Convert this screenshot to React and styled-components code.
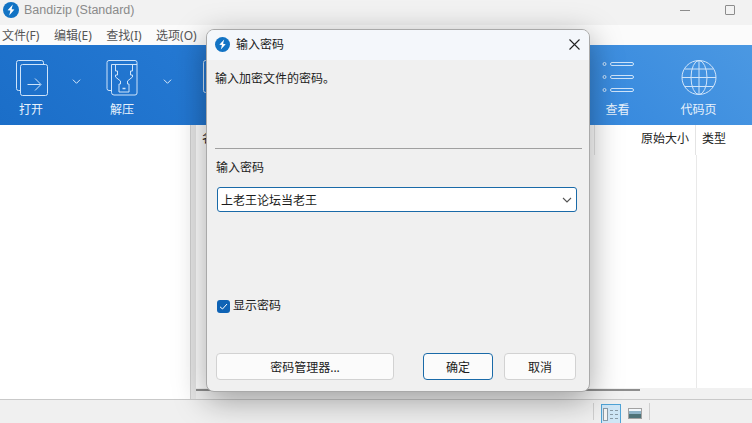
import styled, { createGlobalStyle } from "styled-components"

const GlobalStyle = createGlobalStyle`
  * { box-sizing: border-box; }
  html, body { margin: 0; padding: 0; }
  body {
    font-family: "Noto Sans", "Noto Sans CJK SC", sans-serif;
    font-size: 12px;
    color: #1c1c1c;
    background: #f3f3f3;
  }
`

const LogoIcon = ({ size = 16 }) => (
  <svg width={size} height={size} viewBox="0 0 16 16">
    <circle cx="8" cy="8" r="8" fill="#1273c4" />
    <path d="M9.8 2.6 L4.6 8.2 L7.4 8.6 L6.2 13.4 L11.4 7.6 L8.6 7.2 Z" fill="#fff" />
  </svg>
)

const OpenIcon = () => (
  <svg width="33" height="36" viewBox="0 0 33 36" fill="none" stroke="#cfe4fa" strokeWidth="1">
    <path d="M5.5 30.5 H3.5 a2 2 0 0 1 -2 -2 V2.5 a2 2 0 0 1 2 -2 H26.5 a2 2 0 0 1 2 2 V4.5" />
    <rect x="5.5" y="4.5" width="27" height="31" rx="2" />
    <path d="M12.5 24.5 H25.5 M20 18.5 L26 24.5 L20 30.5" />
  </svg>
)

const UnzipIcon = () => (
  <svg width="32" height="36" viewBox="0 0 32 36" fill="none" stroke="#cfe4fa" strokeWidth="1">
    <path d="M5.5 30.5 H3 a2 2 0 0 1 -2 -2 V2.5 a2 2 0 0 1 2 -2 H29 a2 2 0 0 1 2 2 V33 a2 2 0 0 1 -2 2 H8 a2.5 2.5 0 0 1 -2.5 -2.5 V4.5 H31" />
    <path d="M9.5 4.5 V11 H11.5 V15 H9.5 V17 L14.5 21 V24 H13 V32 H23 V24 H21.5 V21 L26.5 17 V15 H24.5 V11 H26.5 V4.5" />
    <path d="M16.5 28.5 H19.5" strokeWidth="1.5" />
  </svg>
)

const TestIcon = () => (
  <svg width="32" height="36" viewBox="0 0 32 36" fill="none" stroke="#cfe4fa" strokeWidth="1">
    <rect x="0.5" y="0.5" width="30" height="32" rx="2" />
  </svg>
)

const ListIcon = () => (
  <svg width="32" height="36" viewBox="0 0 32 36" fill="none" stroke="#cfe4fa" strokeWidth="1">
    <circle cx="2.5" cy="4" r="1.5" />
    <circle cx="2.5" cy="17" r="1.5" />
    <circle cx="2.5" cy="30" r="1.5" />
    <rect x="8.5" y="2.5" width="23" height="3" rx="1.5" />
    <rect x="8.5" y="15.5" width="23" height="3" rx="1.5" />
    <rect x="8.5" y="28.5" width="23" height="3" rx="1.5" />
  </svg>
)

const GlobeIcon = () => (
  <svg width="36" height="36" viewBox="0 0 36 36" fill="none" stroke="#cfe4fa" strokeWidth="1">
    <circle cx="18" cy="17.5" r="17" />
    <ellipse cx="18" cy="17.5" rx="8" ry="17" />
    <path d="M18 0.5 V34.5 M1 17.5 H35 M4 9 H32 M4 26.5 H32" />
  </svg>
)

const Chevron = ({ color = "#dcebfb", size = 9 }) => (
  <svg width={size} height={size} viewBox="0 0 10 10" fill="none" stroke={color} strokeWidth="1.1">
    <path d="M1 3 L5 7 L9 3" />
  </svg>
)

const Page = styled.div`
  position: relative;
  width: 752px;
  height: 423px;
  overflow: hidden;
  display: flex;
  flex-direction: column;
  background: #f3f3f3;
`

const TitleBar = styled.div`
  height: 25px;
  flex: none;
  display: flex;
  align-items: center;
  padding: 0 17px 5px 3px;
  gap: 5px;
  background: #f2f2f2;
  color: #8a8a8a;
  font-family: "Liberation Sans", "Noto Sans CJK SC", sans-serif;
  font-size: 12.5px;
`

const TitleText = styled.span`
  flex: 1;
`

const MinimizeGlyph = styled.span`
  width: 10px;
  height: 1px;
  background: #8c8c8c;
  margin-right: 30px;
`

const MaximizeGlyph = styled.span`
  width: 10px;
  height: 10px;
  border: 1px solid #8c8c8c;
  border-radius: 1px;
`

const MenuBar = styled.div`
  height: 20px;
  flex: none;
  display: flex;
  align-items: center;
  gap: 14.5px;
  padding-left: 2px;
  background: #fbfbfb;
  color: #555;
  font-size: 12px;
`

const Toolbar = styled.div`
  height: 80px;
  flex: none;
  display: flex;
  align-items: stretch;
  background: linear-gradient(45deg, #1b6ec8 0%, #2d82dc 60%, #4b98e2 100%);
  color: #e8f2fc;
`

const ToolGroup = styled.div`
  display: flex;
  margin-left: ${(p) => (p.$right ? "auto" : "0")};
`

const Tool = styled.div`
  width: ${(p) => p.$width}px;
  display: flex;
  flex-direction: column;
  align-items: center;
  padding-top: 15px;
  gap: 5px;
  font-size: 12px;
  line-height: 17px;
`

const ToolChevron = styled.div`
  width: 29px;
  padding: 28px 0 0 10px;
`

const Body = styled.div`
  flex: 1;
  display: flex;
  min-height: 0;
`

const SidePanel = styled.div`
  width: 190px;
  background: #fff;
`

const Splitter = styled.div`
  width: 6px;
  background: #e6e6e6;
  border-left: 1px solid #cfcfcf;
`

const ListPane = styled.div`
  flex: 1;
  display: flex;
  flex-direction: column;
  background: #fff;
`

const ListHeader = styled.div`
  height: 30px;
  display: flex;
  line-height: 27px;
  color: #222;
`

const HeaderCell = styled.div`
  flex: ${(p) => (p.$width ? `0 0 ${p.$width}px` : "1")};
  padding: 0 6px 0 6px;
  text-align: ${(p) => (p.$end ? "right" : "left")};
  border-right: 1px solid #e4e4e4;
  &:last-child { border-right: none; }
`

const ListRows = styled.div`
  flex: 1;
  display: flex;
  justify-content: flex-end;
`

const ColumnLine = styled.div`
  width: 56px;
  border-left: 1px solid #e9e9e9;
`

const ScrollTrack = styled.div`
  height: 11px;
  background: #f1f1f1;
  display: flex;
  align-items: flex-start;
  padding-top: 1px;
`

const ScrollThumb = styled.div`
  width: 444px;
  height: 2px;
  background: #8d8d8d;
`

const StatusBar = styled.div`
  height: 24px;
  flex: none;
  display: flex;
  align-items: center;
  justify-content: flex-end;
  padding-right: 99px;
  gap: 4px;
  background: #f0f0f0;
  border-top: 1px solid #c9c9c9;
`

const StatusDivider = styled.div`
  width: 1px;
  height: 17px;
  background: #cfcfcf;
  margin: 0 3px;
`

const DetailButton = styled.div`
  width: 20px;
  height: 19px;
  align-self: flex-end;
  display: flex;
  align-items: center;
  justify-content: center;
  background: #cfe6f6;
  border: 1px solid #4fa3d6;
  border-bottom: none;
`

const Thumb = styled.div`
  width: 14px;
  height: 11px;
  margin: 3px 0 0 3px;
  border: 1px solid #a2a2a2;
  background: linear-gradient(#f4f8fb 0 25%, #8fb4c8 25% 60%, #4f7378 60%);
`

const Dialog = styled.div`
  position: absolute;
  left: 206px;
  top: 29px;
  width: 384px;
  height: 363px;
  display: flex;
  flex-direction: column;
  background: #f0f0f0;
  border: 1px solid #a9a9a9;
  border-radius: 8px;
  box-shadow: 0 8px 32px rgba(0, 0, 0, 0.36);
  overflow: hidden;
`

const DialogTitle = styled.div`
  height: 30px;
  flex: none;
  display: flex;
  align-items: center;
  gap: 6px;
  padding: 0 9px 2px 8px;
  background: #f4f7fb;
  color: #1a1a1a;
`

const DialogTitleText = styled.span`
  flex: 1;
`

const DialogBody = styled.div`
  flex: 1;
  display: flex;
  flex-direction: column;
  padding: 0 7px 11px 8px;
`

const Prompt = styled.div`
  margin-top: 10px;
  line-height: 18px;
`

const Divider = styled.div`
  height: 1px;
  margin-top: 60px;
  background: #a0a0a0;
`

const FieldLabel = styled.div`
  margin: 10px 0 0 1px;
  line-height: 18px;
`

const Combo = styled.div`
  margin: 10px 5px 0 2px;
  height: 25px;
  display: flex;
  align-items: center;
  justify-content: space-between;
  padding: 0 4px 0 3px;
  background: #fff;
  border: 1px solid #1a6aa8;
  border-radius: 3px;
  font-size: 12px;
`

const CheckRow = styled.div`
  margin: auto 0 0 2px;
  display: flex;
  align-items: center;
  gap: 3px;
  line-height: 18px;
`

const CheckBox = styled.span`
  width: 13px;
  height: 13px;
  display: flex;
  align-items: center;
  justify-content: center;
  background: #0f63b5;
  border-radius: 3px;
`

const ButtonRow = styled.div`
  margin: 38px 0 0 1px;
  display: flex;
  gap: 11px;
`

const Button = styled.div`
  width: ${(p) => p.$width}px;
  margin-right: ${(p) => p.$gap || 0}px;
  height: 27px;
  display: flex;
  align-items: center;
  justify-content: center;
  background: #fbfbfb;
  border: 1px solid ${(p) => (p.$primary ? "#1a6aa8" : "#d2d2d2")};
  border-radius: 4px;
`

export default function App() {
  return (
    <>
      <GlobalStyle />
      <Page>
        <TitleBar>
          <LogoIcon />
          <TitleText>Bandizip (Standard)</TitleText>
          <MinimizeGlyph />
          <MaximizeGlyph />
        </TitleBar>
        <MenuBar>
          <span>文件(F)</span>
          <span>编辑(E)</span>
          <span>查找(I)</span>
          <span>选项(O)</span>
        </MenuBar>
        <Toolbar>
          <ToolGroup>
            <Tool $width={62}>
              <OpenIcon />
              打开
            </Tool>
            <ToolChevron>
              <Chevron />
            </ToolChevron>
            <Tool $width={62}>
              <UnzipIcon />
              解压
            </Tool>
            <ToolChevron>
              <Chevron />
            </ToolChevron>
            <Tool $width={74}>
              <TestIcon />
              测试
            </Tool>
          </ToolGroup>
          <ToolGroup $right>
            <Tool $width={81}>
              <ListIcon />
              查看
            </Tool>
            <Tool $width={81}>
              <GlobeIcon />
              代码页
            </Tool>
            <Tool $width={13} />
          </ToolGroup>
        </Toolbar>
        <Body>
          <SidePanel />
          <Splitter />
          <ListPane>
            <ListHeader>
              <HeaderCell>名称</HeaderCell>
              <HeaderCell $width={101} $end>原始大小</HeaderCell>
              <HeaderCell $width={56}>类型</HeaderCell>
            </ListHeader>
            <ListRows>
              <ColumnLine />
            </ListRows>
            <ScrollTrack>
              <ScrollThumb />
            </ScrollTrack>
          </ListPane>
        </Body>
        <StatusBar>
          <StatusDivider />
          <DetailButton>
            <svg width="16" height="13" viewBox="0 0 16 13" fill="none" stroke="#8a9aa6">
              <rect x="0.5" y="0.5" width="4" height="12" fill="#f4f4f4" />
              <path d="M7 2.5 H10 M12 2.5 H15 M7 6.5 H10 M12 6.5 H15 M7 10.5 H10 M12 10.5 H15" />
            </svg>
          </DetailButton>
          <Thumb />
          <StatusDivider />
        </StatusBar>
        <Dialog>
          <DialogTitle>
            <LogoIcon size={15} />
            <DialogTitleText>输入密码</DialogTitleText>
            <svg width="11" height="11" viewBox="0 0 11 11" fill="none" stroke="#222" strokeWidth="1.1">
              <path d="M0.5 0.5 L10.5 10.5 M10.5 0.5 L0.5 10.5" />
            </svg>
          </DialogTitle>
          <DialogBody>
            <Prompt>输入加密文件的密码。</Prompt>
            <Divider />
            <FieldLabel>输入密码</FieldLabel>
            <Combo>
              上老王论坛当老王
              <Chevron color="#555" size={10} />
            </Combo>
            <CheckRow>
              <CheckBox>
                <svg width="9" height="9" viewBox="0 0 9 9" fill="none" stroke="#fff" strokeWidth="1">
                  <path d="M1 4.8 L3.5 7 L8 2" />
                </svg>
              </CheckBox>
              显示密码
            </CheckRow>
            <ButtonRow>
              <Button $width={178} $gap={18}>密码管理器...</Button>
              <Button $width={70} $primary>确定</Button>
              <Button $width={72}>取消</Button>
            </ButtonRow>
          </DialogBody>
        </Dialog>
      </Page>
    </>
  )
}
